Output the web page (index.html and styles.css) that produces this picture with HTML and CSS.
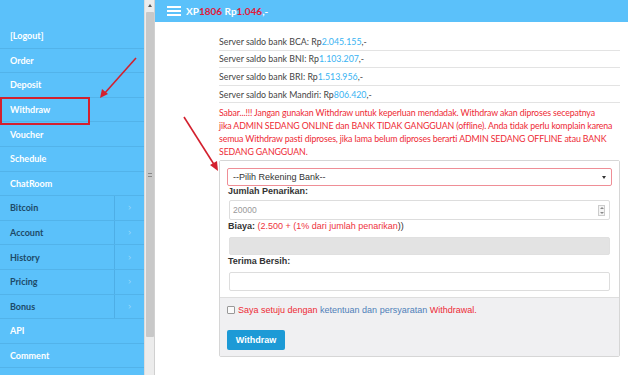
FILE: index.html
```html
<!DOCTYPE html>
<html>
<head>
<meta charset="utf-8">
<link rel="stylesheet" href="styles.css">
</head>
<body>
<div class="app">
  <nav class="sidebar">
    <a class="item">[Logout]</a>
    <a class="item">Order</a>
    <a class="item">Deposit</a>
    <a class="item active">Withdraw</a>
    <a class="item">Voucher</a>
    <a class="item">Schedule</a>
    <a class="item">ChatRoom</a>
    <a class="item sub"><span class="lbl">Bitcoin</span><span class="chev">&gt;</span></a>
    <a class="item sub"><span class="lbl">Account</span><span class="chev">&gt;</span></a>
    <a class="item sub"><span class="lbl">History</span><span class="chev">&gt;</span></a>
    <a class="item sub"><span class="lbl">Pricing</span><span class="chev">&gt;</span></a>
    <a class="item sub"><span class="lbl">Bonus</span><span class="chev">&gt;</span></a>
    <a class="item">API</a>
    <a class="item">Comment</a>
  </nav>
  <div class="scrollbar">
    <div class="sb-up"></div>
    <div class="sb-thumb"><span class="grip"></span></div>
  </div>
  <main class="main">
    <header class="topbar">
      <span class="burger"><i></i><i></i><i></i></span>
      <span class="xp">XP<em>1806</em> Rp<em>1.046</em>,-</span>
    </header>
    <section class="content">
      <div class="bank">Server saldo bank BCA: Rp<b>2.045.155</b>,-</div>
      <div class="bank">Server saldo bank BNI: Rp<b>1.103.207</b>,-</div>
      <div class="bank">Server saldo bank BRI: Rp<b>1.513.956</b>,-</div>
      <div class="bank">Server saldo bank Mandiri: Rp<b>806.420</b>,-</div>
      <p class="warn">Sabar...!!! Jangan gunakan Withdraw untuk keperluan mendadak. Withdraw akan diproses secepatnya<br>jika ADMIN SEDANG ONLINE dan BANK TIDAK GANGGUAN (offline). Anda tidak perlu komplain karena<br>semua Withdraw pasti diproses, jika lama belum diproses berarti ADMIN SEDANG OFFLINE atau BANK<br>SEDANG GANGGUAN.</p>
      <div class="panel">
        <div class="panel-body">
          <div class="select"><span>--Pilih Rekening Bank--</span><span class="caret"></span></div>
          <div class="label first">Jumlah Penarikan:</div>
          <div class="input num"><span>20000</span><span class="spin"><i class="up"></i><i class="down"></i></span></div>
          <div class="label">Biaya: <span class="red">(2.500 + (1% dari jumlah penarikan</span><span class="norm">))</span></div>
          <div class="input disabled"></div>
          <div class="label">Terima Bersih:</div>
          <div class="input"></div>
        </div>
        <div class="panel-footer">
          <div class="agree"><span class="check"></span><span class="red">Saya setuju dengan </span><span class="blue">ketentuan dan persyaratan </span><span class="red">Withdrawal.</span></div>
          <button class="btn">Withdraw</button>
        </div>
      </div>
    </section>
  </main>
</div>
<svg class="annot" width="628" height="375" viewBox="0 0 628 375">
  <rect x="1" y="98" width="88" height="26" fill="none" stroke="#d3202e" stroke-width="2"/>
  <line x1="136" y1="58" x2="104" y2="94" stroke="#d3202e" stroke-width="1.6"/>
  <polygon points="100,98 102,89 108,94" fill="#d3202e"/>
  <line x1="184" y1="117" x2="215" y2="166" stroke="#d3202e" stroke-width="1.6"/>
  <polygon points="218,171 210,165 217,161" fill="#d3202e"/>
</svg>
</body>
</html>
```
FILE: styles.css
```css
* { box-sizing: border-box; }
html, body { margin: 0; padding: 0; background: #fff; }
body { width: 628px; height: 375px; overflow: hidden; position: relative; font-family: "Lato", "Open Sans", sans-serif; }
.app { display: flex; height: 375px; }

.sidebar { width: 144px; background: #5bc1fa; padding-top: 24px; display: flex; flex-direction: column; flex-shrink: 0; }
.item { height: 24.6px; border-bottom: 1px solid #52b3ea; display: flex; align-items: center; padding-left: 10px; color: #fff; font-weight: 700; font-size: 9px; }
.item.sub { color: #1d4a68; padding-left: 0; }
.item.sub .lbl { width: 115px; padding-left: 10px; height: 100%; display: flex; align-items: center; border-right: 1px solid #4eaee6; }
.item.sub .chev { flex: 1; text-align: center; color: #9fdcfc; font-weight: 400; font-size: 9px; transform: scaleX(0.6); }

.scrollbar { width: 11px; background: #ececec; border-left: 1px solid #dcdcdc; border-right: 1px solid #d0d0d0; flex-shrink: 0; display: flex; flex-direction: column; align-items: center; }
.sb-up { width: 0; height: 0; margin-top: 4px; border-left: 2px solid transparent; border-right: 2px solid transparent; border-bottom: 3px solid #555; }
.sb-thumb { width: 8px; height: 325px; margin-top: 5px; background: #c8c8c8; border-radius: 1px; display: flex; align-items: center; justify-content: center; }
.grip { width: 4px; height: 4px; border-top: 1px solid #888; border-bottom: 1px solid #888; position: relative; }

.main { flex: 1; display: flex; flex-direction: column; }
.topbar { height: 22px; background: #5bc1fa; display: flex; align-items: center; padding-left: 12px; }
.burger { display: flex; flex-direction: column; gap: 2px; width: 14px; margin-right: 5px; }
.burger i { display: block; height: 2px; background: #fff; }
.xp { color: #fff; font-weight: 700; font-size: 10px; font-family: "Lato", sans-serif; }
.xp em { font-style: normal; color: #e01b3c; }

.content { padding: 11px 8px 0 64px; font-size: 8.8px; color: #444; }
.bank { height: 17.6px; display: flex; align-items: center; border-bottom: 1px solid #e3e3e3; }
.bank b { font-weight: 400; color: #38b3f2; }
.warn { margin: 3px 0 0 0; color: #ee2a35; line-height: 13px; font-size: 8.8px; letter-spacing: -0.13px; white-space: nowrap; }

.panel { margin-top: 2px; border: 1px solid #d6d6d6; border-radius: 2px; font-family: "Liberation Sans", Arial, sans-serif; }
.panel-body { padding: 7px 7px 6px 7px; background: #fff; }
.select { height: 18px; border: 1px solid #ef8e96; border-radius: 2px; display: flex; align-items: center; justify-content: space-between; padding: 0 5px 0 5px; font-size: 9px; color: #333; }
.caret { width: 0; height: 0; border-left: 2.5px solid transparent; border-right: 2.5px solid transparent; border-top: 3px solid #333; }
.label { font-size: 9px; font-weight: 700; color: #333; line-height: 11px; margin: 1px 0 5px 1px; }
.label.first { margin: 0 0 3px 1px; }
.label .red { color: #ee3340; font-weight: 400; }
.label .norm { color: #333; font-weight: 400; }
.input { height: 19px; border: 1px solid #ddd; border-radius: 2px; margin: 0 2px; background: #fff; font-size: 8.5px; color: #999; display: flex; align-items: center; justify-content: space-between; padding: 0 4px 0 3px; }
.input.num { height: 20px; }
.input.disabled { height: 18px; background: #e3e3e3; border-color: #e0e0e0; }
.spin { width: 7px; height: 11px; border: 1px solid #ccc; display: flex; flex-direction: column; justify-content: space-around; align-items: center; background: #f4f4f4; }
.spin i { width: 0; height: 0; border-left: 2px solid transparent; border-right: 2px solid transparent; }
.spin .up { border-bottom: 2px solid #888; }
.spin .down { border-top: 2px solid #888; }

.panel-footer { background: #f0f0f2; border-top: 1px solid #dedede; padding: 7px 7px 6px 7px; }
.agree { font-size: 9px; line-height: 11px; white-space: nowrap; }
.check { display: inline-block; vertical-align: -1px; width: 8px; height: 8px; border: 1px solid #999; background: #fafafa; margin-right: 3px; border-radius: 1px; }
.agree .red { color: #ee2a35; }
.agree .blue { color: #4f7fb9; }
.btn { display: block; margin-top: 14px; width: 58px; height: 20px; border: 0; border-radius: 2px; background: #1d9ad6; color: #fff; font-weight: 700; font-size: 9px; font-family: "Liberation Sans", Arial, sans-serif; padding: 0; }

.annot { position: absolute; left: 0; top: 0; pointer-events: none; }
```
